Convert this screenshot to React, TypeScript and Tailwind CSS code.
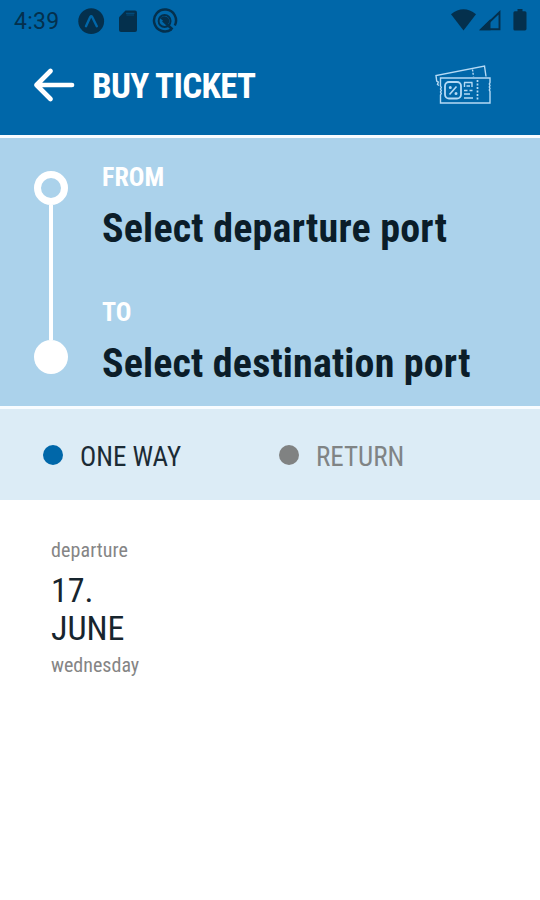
import React from 'react';

function StatusBar() {
  return (
    <div className="flex h-[44px] items-start text-[#04304d]">
      <span className="ml-[14px] mt-[7px] w-[64px] text-[23px] leading-[30px] tracking-[0.3px]">4:39</span>
      <svg className="mt-[8px] h-[27px] w-[27px]" viewBox="0 0 27 27">
        <circle cx="13.2" cy="13.2" r="12.9" fill="currentColor" />
        <path d="M8 18.2 12.2 9q1-1.7 2 0l4.6 9.2" fill="none" stroke="#0067a9" strokeWidth="2.4" strokeLinecap="round" />
      </svg>
      <svg className="ml-[14px] mt-[10px] h-[23px] w-[19px]" viewBox="0 0 19 23">
        <path d="M6.5.6H16q2 0 2 2V20q0 2-2 2H2q-2 0-2-2V7.2z" fill="currentColor" />
        <path d="M7 3.3h8.500M7.500 5h7.500" stroke="#0067a9" strokeWidth="1.2" opacity=".5" />
      </svg>
      <svg className="ml-[14px] mt-[8px] h-[26px] w-[26px]" viewBox="0 0 26 26" fill="none" stroke="currentColor">
        <path d="M19.300 21.500A11 11 0 1 1 22.800 17.500" strokeWidth="2.500" />
        <circle cx="12.600" cy="13" r="6" strokeWidth="1.900" />
        <path d="M8.300 10.500a5 5 0 0 1 9 3.500l-1.500 2.500z" fill="currentColor" stroke="none" />
        <path d="M11 12.500l9.500 9" strokeWidth="2.600" />
      </svg>
      <svg className="ml-auto mt-[9px] h-[22px] w-[25px]" viewBox="0 0 25 22">
        <path d="M0 5.2Q12.5-4.8 25 5.2L12.5 21.5z" fill="currentColor" />
      </svg>
      <svg className="ml-[3px] mt-[9px] h-[22px] w-[22px]" viewBox="0 0 22 22">
        <path d="M2.8 20.2 20.5 3.2v17z" fill="none" stroke="currentColor" strokeWidth="1.9" />
        <path d="M0 21.3 11.5 10v11.3z" fill="currentColor" />
      </svg>
      <svg className="ml-[12px] mr-[13px] mt-[8px] h-[23px] w-[14px]" viewBox="0 0 14 23">
        <path d="M4.5 1h5v2.3H12q1.5 0 1.5 1.5v16Q13.500 22.500 12 22.500H1.900Q.4 22.500.4 21V4.800Q.4 3.300 1.900 3.300H4.500z" fill="currentColor" />
      </svg>
    </div>
  );
}

function TicketIcon() {
  return (
    <svg className="mr-[49px] h-[40px] w-[57px]" viewBox="0 0 57 40" fill="none" stroke="#b5daf5" strokeWidth="1.400">
      <path d="M5 20.500 3.500 19.500l.8-2.500-1.600-1L2 10.500 50.500 1l1.500 10.500" />
      <path d="M38.500 4.500l1 7" strokeDasharray="2 1.300" />
      <path d="M6.500 13h49.500v4.500l-.7 1.500.7 1.500-.7 1.500.7 1.500-.7 1.500.7 1.500V38H6.500v-8l.8-1.500-.8-1.500.8-1.500-.8-1.500.8-1.500-.8-1.500z" />
      <rect x="11" y="17" width="16" height="16.500" rx="4" strokeWidth="1.800" />
      <path d="M15.500 29.500l7-8" strokeWidth="1.600" />
      <circle cx="16.300" cy="22.500" r=".8" />
      <circle cx="22" cy="28.500" r=".8" />
      <path d="M30 17.500h8.500M30.500 17.500v4.500M38 17.500v4.500M32.500 21h3.500M30 25.500h3.500M35.500 25.500h3M30 29h6M30 33h9" />
      <path d="M43.500 15v21" strokeDasharray="2 1.500" strokeWidth="1.700" />
    </svg>
  );
}

export default function App() {
  return (
    <main className="h-[900px] w-[540px] overflow-hidden whitespace-nowrap bg-white font-['Roboto_Condensed',Roboto,sans-serif] text-[#0b1d29] [font-stretch:75%]">
      <header className="h-[135px] bg-[#0067a9]">
        <div className="font-[Roboto,sans-serif] [font-stretch:100%]">
          <StatusBar />
        </div>
        <div className="flex h-[82px] items-center">
          <svg className="ml-[33px] h-[36px] w-[42px]" viewBox="0 0 42 36" fill="none" stroke="white" strokeWidth="4.700" strokeLinecap="round" strokeLinejoin="round">
            <path d="M17.500 4 3.500 18l14 14M3.500 18H39" />
          </svg>
          <h1 className="ml-[17px] pt-[4px] text-[35px] font-bold leading-[40px] tracking-[-0.65px] text-white">BUY TICKET</h1>
          <div className="ml-auto">
            <TicketIcon />
          </div>
        </div>
      </header>
      <section className="flex h-[274px] border-y-[3px] border-[#f8fcff] bg-[#abd2eb]">
        <div className="ml-[34px] mt-[33px] flex h-[203px] w-[34px] flex-col items-center">
          <div className="h-[34px] w-[34px] rounded-full border-[7px] border-white" />
          <div className="w-[4px] flex-1 bg-white" />
          <div className="h-[34px] w-[34px] rounded-full bg-white" />
        </div>
        <div className="ml-[34px] pt-[23px]">
          <div className="h-[135px]">
            <div className="text-[26px] font-bold leading-[32px] text-white">FROM</div>
            <div className="mt-[12px] text-[40px] font-bold leading-[48px] tracking-[0.2px]">Select departure port</div>
          </div>
          <div className="text-[26px] font-bold leading-[32px] text-white">TO</div>
          <div className="mt-[12px] text-[40px] font-bold leading-[48px] tracking-[0.15px]">Select destination port</div>
        </div>
      </section>
      <section className="flex h-[91px] items-center bg-[#dcecf6] text-[27px] leading-[32px]">
        <div className="ml-[43px] flex w-[236px] items-center">
          <span className="h-[20px] w-[20px] rounded-full bg-[#0067a9]" />
          <span className="ml-[17px] translate-y-[2px] text-[#1b2b35]">ONE WAY</span>
        </div>
        <div className="flex items-center text-[#808485]">
          <span className="h-[20px] w-[20px] rounded-full bg-[#808282]" />
          <span className="ml-[17px] translate-y-[2px]">RETURN</span>
        </div>
      </section>
      <section className="ml-[51px] pt-[37px]">
        <div className="text-[20px] leading-[26px] tracking-[0.1px] text-[#858585]">departure</div>
        <div className="mt-[8px] text-[34px] leading-[38px] text-[#17252e]">17.</div>
        <div className="text-[34px] leading-[38px] text-[#17252e]">JUNE</div>
        <div className="mt-[5px] text-[20px] leading-[26px] text-[#858585]">wednesday</div>
      </section>
    </main>
  );
}
